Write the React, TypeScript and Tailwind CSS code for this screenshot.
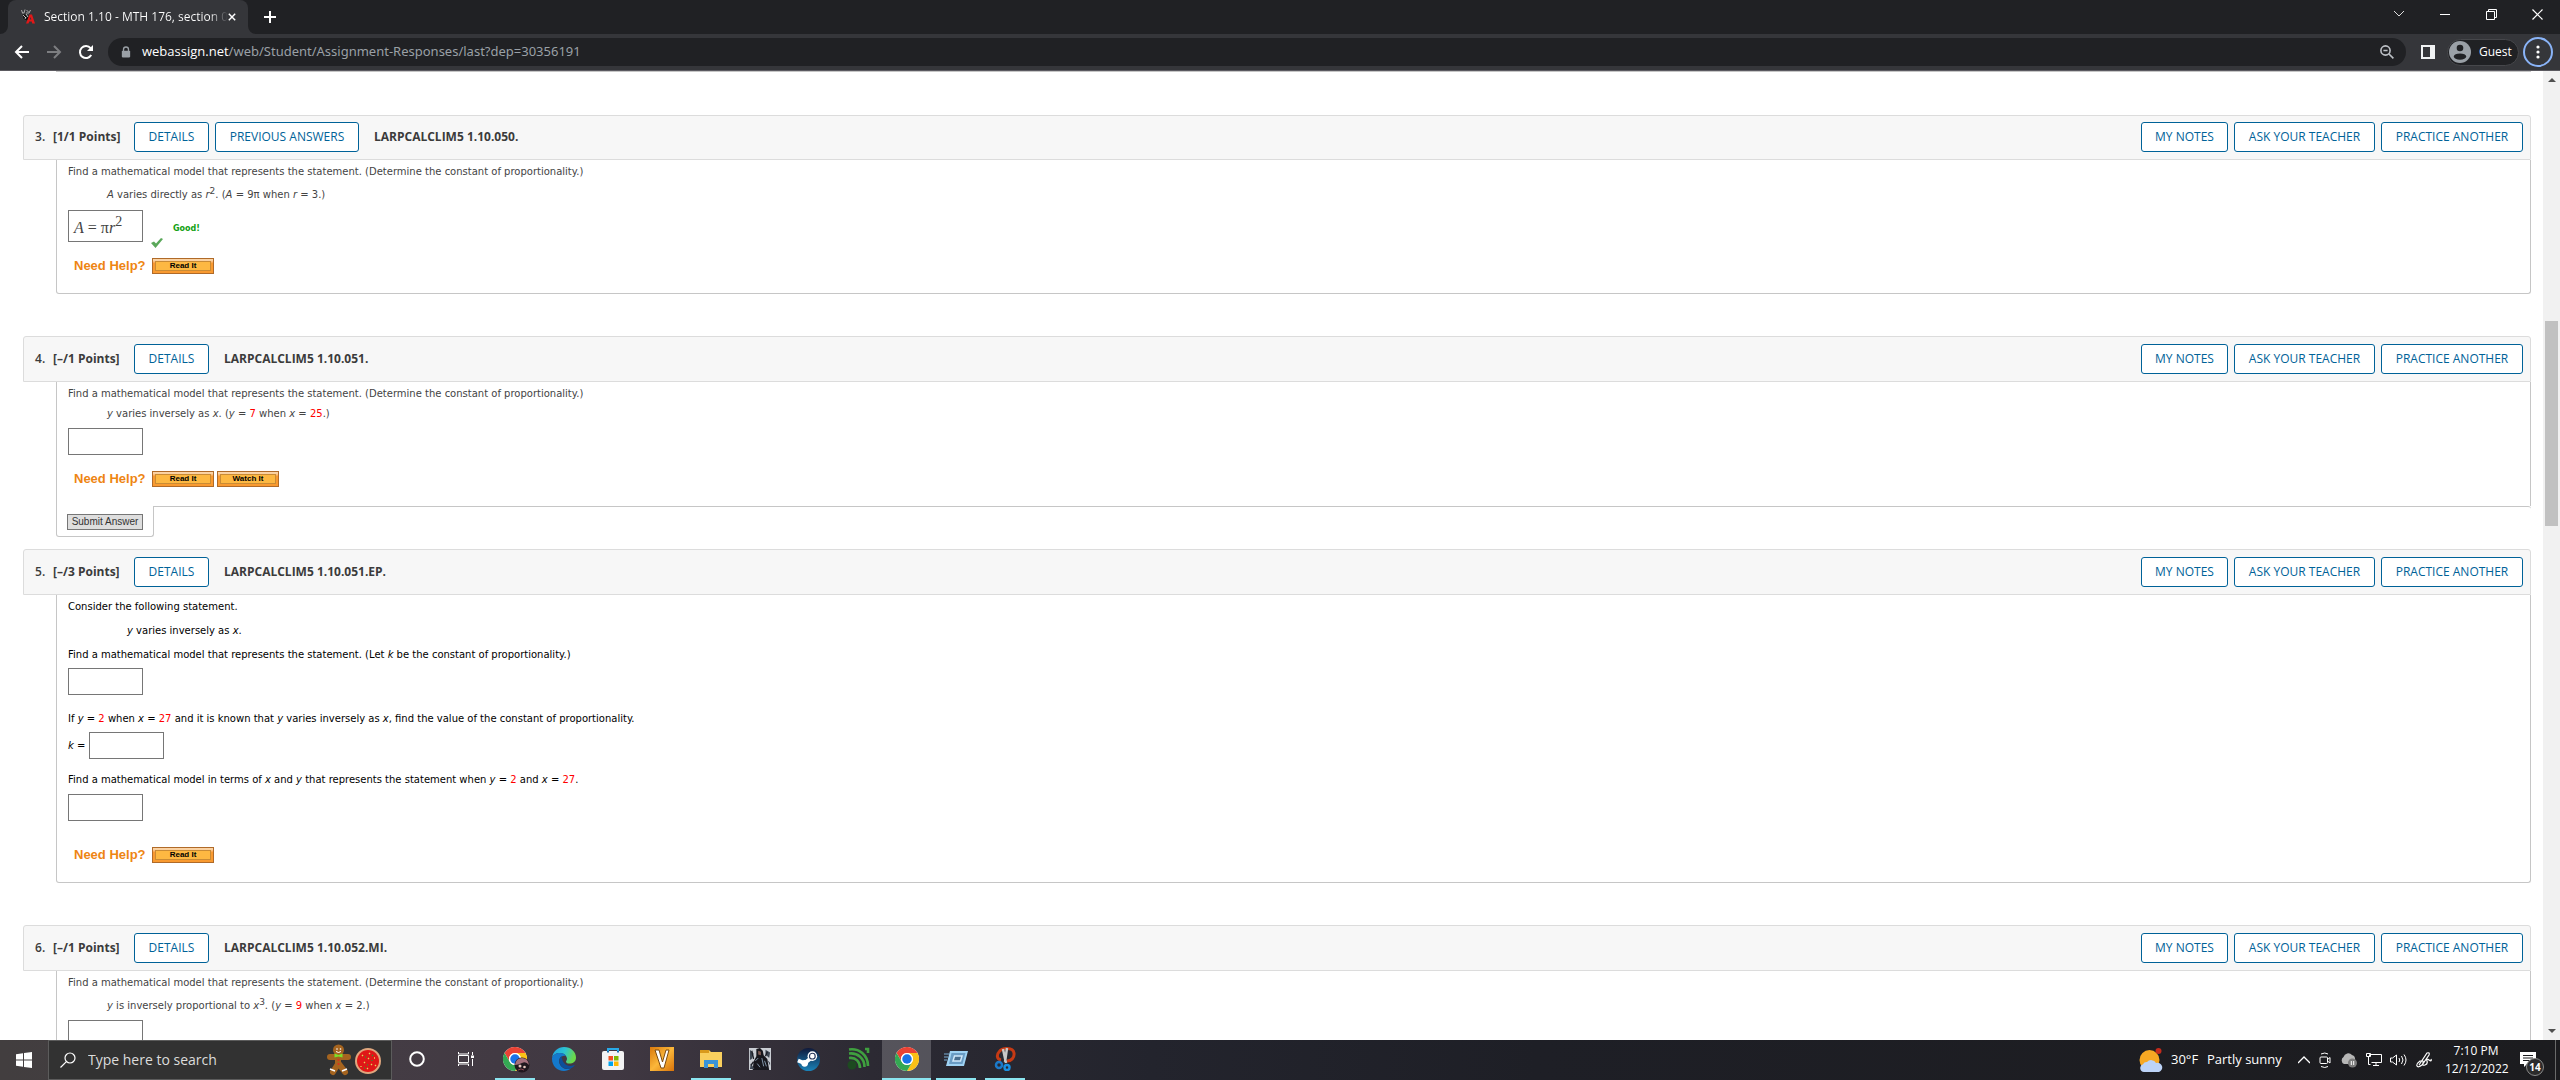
import React, { type ReactNode, useId } from "react";

const I = ({ children }: { children: ReactNode }) => <i>{children}</i>;
const R = ({ children }: { children: ReactNode }) => <span className="text-[#ff0000]">{children}</span>;

function OutlineButton({ children, className = "" }: { children: ReactNode; className?: string }) {
  return (
    <button className={`h-[30px] shrink-0 whitespace-nowrap rounded-[3px] border border-[#006298] bg-white text-center font-['Open_Sans',sans-serif] text-xs text-[#006298] ${className}`}>
      {children}
    </button>
  );
}

function QuestionHeader({ num, points, code, previous }: { num: string; points: string; code: string; previous?: boolean }) {
  return (
    <header className={`flex items-center rounded-t-[3px] border border-[#dcdcdc] bg-[#f7f7f7] pb-px pl-[11px] pr-[7px] font-['Open_Sans',sans-serif] text-xs font-bold text-[#3b3b3b] ${previous ? "h-[45px]" : "h-[46px]"}`}>
      <span className="w-[18px] font-semibold">{num}.</span>
      <span className="w-[81px]">[{points} Points]</span>
      <div className="mr-[15px] flex gap-[6px]">
        <OutlineButton className="w-[75px] font-normal">DETAILS</OutlineButton>
        {previous && <OutlineButton className="w-[144px] font-normal">PREVIOUS ANSWERS</OutlineButton>}
      </div>
      <h2>{code}</h2>
      <div className="ml-auto flex gap-[6px]">
        <OutlineButton className="w-[87px] font-normal">MY NOTES</OutlineButton>
        <OutlineButton className="w-[141px] font-normal">ASK YOUR TEACHER</OutlineButton>
        <OutlineButton className="w-[142px] font-normal">PRACTICE ANOTHER</OutlineButton>
      </div>
    </header>
  );
}

function AnswerBox({ label, id }: { label?: string; id?: string }) {
  return <input id={id} aria-label={label} className="block h-[27px] w-[75px] border border-[#767676] bg-white px-1" />;
}

function HelpButton({ children }: { children: ReactNode }) {
  return (
    <button className="h-4 w-[62px] border border-[#b06a28] bg-gradient-to-b from-[#fbd3a4] from-10% to-[#f99a30] to-30% p-[2px] font-['Liberation_Sans',sans-serif] text-[8px] font-bold text-black">
      <span className="flex h-full items-center justify-center border border-[#c98b35] bg-[#fdb842]">{children}</span>
    </button>
  );
}

function NeedHelp({ watch }: { watch?: boolean }) {
  return (
    <div className="flex h-4 items-center gap-[3px] pl-[6px]">
      <span className="w-[75px] whitespace-nowrap font-['Liberation_Sans',sans-serif] text-[13px] font-bold text-[#ee8512]">Need Help?</span>
      <HelpButton>Read It</HelpButton>
      {watch && <HelpButton>Watch It</HelpButton>}
    </div>
  );
}

const bodyBase = "ml-[33px] rounded-b-[3px] border-x border-b border-[#c6c6c6] pl-[11px] pt-1 font-['DejaVu_Sans',Verdana,sans-serif] text-[10px] leading-4";

function Chrome({ className = "" }: { className?: string }) {
  return (
    <svg viewBox="0 0 48 48" className={className} aria-hidden="true">
      <circle cx="24" cy="24" r="24" fill="#fff" />
      <path d="M24 12h20.8A24 24 0 0 0 3.2 12l10.4 18A12 12 0 0 1 24 12z" fill="#ea4335" />
      <path d="M34.4 30 24 48a24 24 0 0 0 20.8-36H24a12 12 0 0 1 10.4 18z" fill="#fbc116" />
      <path d="M13.6 30 3.2 12A24 24 0 0 0 24 48l10.4-18a12 12 0 0 1-20.8 0z" fill="#34a853" />
      <circle cx="24" cy="24" r="12" fill="#fff" />
      <circle cx="24" cy="24" r="9.5" fill="#1a73e8" />
    </svg>
  );
}

function BrowserTop() {
  return (
    <header className="shrink-0 bg-[#202124] font-['Open_Sans',sans-serif] text-white">
      <div className="flex h-[34px] items-stretch pl-2">
        <div className="relative flex w-60 items-center rounded-t-lg bg-[#35363a] pl-3">
          <svg viewBox="0 0 8 8" className="absolute -left-2 bottom-0 h-2 w-2" fill="#35363a" aria-hidden="true"><path d="M8 0v8H0a8 8 0 0 0 8-8z" /></svg>
          <svg viewBox="0 0 8 8" className="absolute -right-2 bottom-0 h-2 w-2" fill="#35363a" aria-hidden="true"><path d="M0 0v8h8a8 8 0 0 1-8-8z" /></svg>
          <svg viewBox="0 0 16 16" className="h-4 w-4" aria-hidden="true">
            <path d="M1.5 1l1 3M5 .5L4 4M6.5 1l2 2M10.5 1L9 4M2 4h2M6 4h3" stroke="#a8a8a8" fill="none" />
            <path d="M2 5l3 0 4 1v4l-2 2-4-2z" fill="#111" stroke="#555" strokeWidth=".5" />
            <path d="M3 6l3 3M6 5l2 3M5 10l1-2" stroke="#e8e8e8" strokeWidth=".8" />
            <path d="M6 14.5l3.5-9h2.500l3 9h-2.800l-.5-2H9.200l-.7 2zM9.700 10.500h1.600L10.600 8z" fill="#e01818" />
          </svg>
          <span className="ml-2 w-[184px] whitespace-nowrap bg-gradient-to-r from-white from-90% to-[#35363a] bg-clip-text text-xs text-transparent">Section 1.10 - MTH 176, section 0</span>
          <button aria-label="Close tab" className="-ml-1 grid h-4 w-4 place-items-center">
            <svg viewBox="0 0 10 10" className="h-2 w-2" aria-hidden="true"><path d="M1 1l8 8M9 1l-8 8" stroke="#fff" strokeWidth="1.8" /></svg>
          </button>
        </div>
        <button aria-label="New tab" className="ml-3 grid w-5 place-items-center">
          <svg viewBox="0 0 12 12" className="h-3 w-3" aria-hidden="true"><path d="M6 0v12M0 6h12" stroke="#fff" strokeWidth="2" /></svg>
        </button>
        <div className="ml-auto flex pb-[6px]">
          <button aria-label="Search tabs" className="grid w-[46px] place-items-center">
            <svg viewBox="0 0 12 8" className="h-2 w-3" fill="none" stroke="#ddd"><path d="M1 1l5 5 5-5" /></svg>
          </button>
          <button aria-label="Minimize" className="grid w-[46px] place-items-center"><span className="h-px w-[10px] bg-white" /></button>
          <button aria-label="Restore" className="grid w-[46px] place-items-center">
            <svg viewBox="0 0 11 11" className="h-[11px] w-[11px]" fill="none" stroke="#fff"><path d="M.5 2.5h8v8h-8zM2.5 2.5v-2h8v8h-2" /></svg>
          </button>
          <button aria-label="Close" className="grid w-[46px] place-items-center">
            <svg viewBox="0 0 11 11" className="h-[11px] w-[11px]" fill="none" stroke="#fff" strokeWidth="1.2"><path d="M.5.5l10 10M10.5.5l-10 10" /></svg>
          </button>
        </div>
      </div>
      <div className="flex h-[37px] items-center border-b border-[#5b5a60] bg-[#35363a] pl-[14px] pr-[7px]">
        <div className="flex w-[94px] gap-4">
          <button aria-label="Back"><svg viewBox="0 0 16 16" className="h-4 w-4" fill="none" stroke="#fff" strokeWidth="2"><path d="M15 8H2M8 2L2 8l6 6" /></svg></button>
          <button aria-label="Forward"><svg viewBox="0 0 16 16" className="h-4 w-4" fill="none" stroke="#7d7e81" strokeWidth="2"><path d="M1 8h13M8 2l6 6-6 6" /></svg></button>
          <button aria-label="Reload"><svg viewBox="0 0 16 16" className="h-4 w-4" fill="none" stroke="#fff" strokeWidth="2"><path d="M13.2 11A6 6 0 1 1 12.6 4.2" /><path d="M15 1v6H9z" fill="#fff" stroke="none" /></svg></button>
        </div>
        <div className="flex h-7 flex-1 items-center rounded-full bg-[#202124] px-3">
          <svg viewBox="0 0 12 14" className="mx-[1px] h-3 w-[10px]" aria-hidden="true"><path d="M3 6V4a3 3 0 0 1 6 0v2" fill="none" stroke="#9aa0a6" strokeWidth="1.6" /><rect x="1" y="5.5" width="10" height="8" rx="1" fill="#9aa0a6" /></svg>
          <div className="ml-[10px] text-[13px] text-[#9aa0a6]"><span className="text-white">webassign.net</span><span className="font-['Noto_Sans',sans-serif]">/web/Student/Assignment-Responses/last?dep=30356191</span></div>
          <svg viewBox="0 0 14 14" className="ml-auto h-[14px] w-[14px]" fill="none" stroke="#bdc1c6" strokeWidth="1.6" aria-hidden="true"><circle cx="5.5" cy="5.5" r="4.6" /><path d="M9 9l4.4 4.4M3.4 5.5h4.2" /></svg>
        </div>
        <button aria-label="Side panel" className="ml-[15px]"><svg viewBox="0 0 14 14" className="h-[14px] w-[14px]"><path d="M0 0h14v14H0zM2 2v10h7V2z" fill="#f1f3f4" fillRule="evenodd" /></svg></button>
        <button className="ml-3 flex h-[27px] w-[72px] items-center gap-2 rounded-full border border-[#46474b] bg-[#202124] pl-[1px] text-xs">
          <svg viewBox="0 0 22 22" className="h-[22px] w-[22px]"><circle cx="11" cy="11" r="11" fill="#9aa0a6" /><circle cx="11" cy="7" r="3.3" fill="#202124" /><ellipse cx="11" cy="15.6" rx="6.2" ry="3.2" fill="#202124" /></svg>
          Guest
        </button>
        <button aria-label="Menu" className="ml-1 grid h-[30px] w-[30px] place-items-center rounded-full border-2 border-[#8ab4f8]">
          <svg viewBox="0 0 4 14" className="h-[14px] w-1" fill="#fff"><circle cx="2" cy="2" r="1.6" /><circle cx="2" cy="7" r="1.6" /><circle cx="2" cy="12" r="1.6" /></svg>
        </button>
      </div>
    </header>
  );
}

function TaskItem({ label, open, active, children }: { label: string; open?: boolean; active?: boolean; children: ReactNode }) {
  return (
    <button aria-label={label} className={`flex h-10 w-[49px] flex-col items-center ${active ? "bg-white/20" : ""}`}>
      <span className="grid h-[38px] place-items-center">{children}</span>
      {open && <span className={`h-[2px] bg-[#8be5f0] ${active ? "w-full" : "w-10"}`} />}
    </button>
  );
}

function Taskbar() {
  return (
    <footer className="flex h-10 shrink-0 items-stretch bg-[linear-gradient(90deg,#423e3f_0%,#443c44_15%,#403842_24%,#2c2a33_34%,#23242d_45%,#1e1f26_60%,#1c1c1f_100%)] font-['Open_Sans',sans-serif] text-white">
      <button aria-label="Start" className="grid w-12 place-items-center">
        <svg viewBox="0 0 16 16" className="h-4 w-4" fill="#fff"><path d="M0 2.2l7-1v6.3H0zM8 1l8-1v7.5H8zM0 8.5h7v6.3l-7-1zM8 8.5h8V16l-8-1z" /></svg>
      </button>
      <label className="flex w-[344px] items-center border border-[#5c5c5c] bg-[#323232] pl-[11px]">
        <svg viewBox="0 0 16 16" className="h-4 w-4" fill="none" stroke="#fff" strokeWidth="1.2" aria-hidden="true"><circle cx="10" cy="6" r="5" /><path d="M6.4 9.6L.5 15.5" /></svg>
        <input aria-label="Type here to search" placeholder="Type here to search" className="ml-3 w-[238px] bg-transparent text-sm placeholder:text-[#dcdcdc]" />
        <svg viewBox="0 0 56 32" className="h-8 w-14" aria-hidden="true">
          <g stroke="#a5641f" strokeLinecap="round" strokeWidth="6"><path d="M4 13h18M12 12v9M12 20l-5 8M13 20l6 8" fill="none" /></g>
          <circle cx="12.5" cy="6" r="5.5" fill="#a5641f" />
          <circle cx="11" cy="5" r=".8" fill="#fff" /><circle cx="14.5" cy="5" r=".8" fill="#fff" /><path d="M10 7.5q2.5 2 5 0" stroke="#fff" fill="none" />
          <path d="M8.5 9.5l4 1.5 4-1.5v4l-4-1-4 1z" fill="#7be02a" />
          <circle cx="12.5" cy="16" r="1" fill="#e02b1e" /><circle cx="12.5" cy="20" r="1" fill="#e02b1e" />
          <path d="M4 25l5 2M21 25l-5 2" stroke="#fff" strokeWidth="1.5" />
          <circle cx="42" cy="17" r="13" fill="#e0a77e" /><circle cx="42" cy="17" r="11" fill="#e01717" />
          <path d="M36 11l1 1M43 9l1 1M48 14l1 0M38 18l1 1M45 20l1 1M41 25l1-1M35 22l0 1M49 21l1 1M42 14l1 1" stroke="#e7d25a" strokeWidth="1.3" />
          <path d="M39 13l1 0M46 16l0 1M41 21l1 0M46 11l1 1M38 24l1 0" stroke="#3b8d2c" strokeWidth="1.3" />
        </svg>
      </label>
      <div className="flex">
        <TaskItem label="Cortana"><svg viewBox="0 0 16 16" className="h-4 w-4"><circle cx="8" cy="8" r="6.8" fill="none" stroke="#fff" strokeWidth="2" /></svg></TaskItem>
        <TaskItem label="Task view"><svg viewBox="0 0 16 16" className="h-4 w-4" fill="none" stroke="#fff"><path d="M.5 4.5h10v7H.5zM.5 1v2h10V1M.5 15v-2h10v2M14.5 1v3M14.5 8v7" /><path d="M13 4.5h3v2.5h-3z" fill="#fff" stroke="none" /></svg></TaskItem>
        <TaskItem label="Chrome profile" open>
          <span className="relative"><Chrome className="h-6 w-6" />
            <svg viewBox="0 0 16 16" className="absolute left-[11px] top-[10px] h-4 w-4"><circle cx="8" cy="8" r="7.5" fill="#21181f" /><path d="M1 8Q2 1 8 1t7 7q-3-4-7-2T1 8z" fill="#a5707d" /><circle cx="6" cy="9" r="1.5" fill="#e8c7c0" /><circle cx="10.5" cy="10" r="1.3" fill="#e8c7c0" /><path d="M4 13l3-1 3 1" stroke="#8c4b57" /></svg>
          </span>
        </TaskItem>
        <TaskItem label="Edge">
          <svg viewBox="0 0 24 24" className="h-6 w-6">
            <defs><linearGradient id="edgeA" x1="0" y1="0" x2="1" y2="0.3"><stop offset="0" stopColor="#1f9de3" /><stop offset=".55" stopColor="#2cc3d2" /><stop offset="1" stopColor="#6bd94b" /></linearGradient></defs>
            <path d="M0 11C1 4 6 0 12 0c7 0 12 5 12 10.5 0 4-3 6-6.5 6-2.5 0-3.5-1-3.5-1.8 0-.8 1-1.3 1-3C15 9 12 6 8 6c-4 0-7 2-8 5z" fill="url(#edgeA)" />
            <path d="M0 11c1-3 4-5 8-5 3 0 5 1.3 6 3-5-1-8 3-6.5 7.5C9 21 14 23 19 21.5 17 23 14.5 24 12 24 5 24 0 18.5 0 12z" fill="#1479cc" />
            <path d="M9.5 9C6 12 7 18 11 20.5c4 2.5 9 1.5 11.5-2 .4-.5 0-.8-.4-.5-6 3-12-1-12.6-9z" fill="#0c4f9b" />
          </svg>
        </TaskItem>
        <TaskItem label="Microsoft Store">
          <svg viewBox="0 0 24 24" className="h-6 w-6"><path d="M7 6V2h10v4" fill="none" stroke="#29a9e8" strokeWidth="2" /><rect x="1" y="4" width="22" height="19" rx="2" fill="#f3f3f3" /><path d="M7 5.5V4M17 5.5V4" stroke="#1d6fae" strokeWidth="2" /><path d="M7.5 9H12v4.5H7.5z" fill="#f25022" /><path d="M13 9h4.5v4.5H13z" fill="#7fba00" /><path d="M7.5 14.5H12V19H7.5z" fill="#00a4ef" /><path d="M13 14.5h4.5V19H13z" fill="#ffb900" /></svg>
        </TaskItem>
        <TaskItem label="Vortex">
          <svg viewBox="0 0 24 24" className="h-6 w-6"><defs><linearGradient id="vx" x1="0" y1="0" x2="1" y2="1"><stop offset="0" stopColor="#d9780c" /><stop offset=".5" stopColor="#fbb73a" /><stop offset="1" stopColor="#d8720a" /></linearGradient></defs><path d="M0 0h24v24H0z" fill="url(#vx)" /><path d="M5 3h4l3.5 12L16 3h3l-5 18h-3z" fill="#fff" stroke="#7b4a10" strokeWidth="1" /></svg>
        </TaskItem>
        <TaskItem label="File Explorer" open>
          <svg viewBox="0 0 24 24" className="h-6 w-6"><path d="M1 3h9l2 2h11v15H1z" fill="#f9cf5e" /><path d="M1 3h9v3H1z" fill="#d99a1c" /><path d="M5 13h14v8h-4v-4H9v4H5z" fill="#3a93d8" /></svg>
        </TaskItem>
        <TaskItem label="Game">
          <svg viewBox="0 0 24 24" className="h-[22px] w-[22px]"><path d="M0 0h24v24H0z" fill="#c9cdd3" /><path d="M8 1l4-1 3 3 1 5 4 4 2 12H4l1-9 3-6z" fill="#17171d" /><path d="M1 2l4 4-2 6-2 1zM18 2l5 3-1 6-4-4zM2 17l4 6H1zM20 13l3 3v3z" fill="#3d4652" /><path d="M3 3l2 9M20 4l-2 5M5 15l-3 4" stroke="#1d2028" strokeWidth="1.5" /><path d="M10 3l3 1v4l-3-1z" fill="#7d5b54" /><path d="M7 14l3-3M14 11l2 9M9 17l3 4M17 14l2 6" fill="none" stroke="#8ba0b3" /></svg>
        </TaskItem>
        <TaskItem label="Steam">
          <svg viewBox="0 0 24 24" className="h-[23px] w-[23px]"><defs><linearGradient id="st" x1="0" y1="0" x2="0" y2="1"><stop offset="0" stopColor="#10193a" /><stop offset="1" stopColor="#1983b9" /></linearGradient></defs><circle cx="12" cy="12" r="12" fill="url(#st)" /><path d="M1 13l7 3 6-5" stroke="#fff" strokeWidth="4" fill="none" /><circle cx="8" cy="16" r="3.5" fill="#fff" /><circle cx="16" cy="8.5" r="5" fill="#fff" /><circle cx="16" cy="8.5" r="3" fill="none" stroke="#26375b" strokeWidth="1.2" /></svg>
        </TaskItem>
        <TaskItem label="Feed">
          <svg viewBox="0 0 24 24" className="h-6 w-6" fill="none" stroke="#3fa03f" strokeWidth="2.6"><circle cx="6" cy="18" r="4.5" fill="#1d4a20" stroke="none" /><path d="M3 11c7-1 11 4 11 10M3 6.500c9-1 15.500 5 15.500 13.500M3 2.500C13 1 22 8 22 19M19 2h3v4" /></svg>
        </TaskItem>
        <TaskItem label="Chrome" open active><Chrome className="h-6 w-6" /></TaskItem>
        <TaskItem label="Remote desktop" open>
          <svg viewBox="0 0 24 24" className="h-6 w-6"><path d="M6 4h18l-4 15H2z" fill="#9fd2f3" /><path d="M7.5 6h14l-3 11H5z" fill="#6a9cc4" /><path d="M10.5 9h7.5l-1.5 5H9z" fill="#4a6f90" stroke="#cfe8fa" strokeWidth="1.5" /><path d="M0 7h5M0 10h4M0 13h3" stroke="#78aed6" /></svg>
        </TaskItem>
        <TaskItem label="Snipping tool" open>
          <svg viewBox="0 0 24 24" className="h-6 w-6" fill="none"><path d="M8 13C3 12 4 7 6 5c3-4.500 14-5 15 1 .7 5-3 8-7 8" stroke="#c63a14" strokeWidth="3" /><path d="M10 2l3 14M14 1l-2 14" stroke="#c8c8c8" strokeWidth="2.5" /><circle cx="6" cy="18" r="3" stroke="#1b79c9" strokeWidth="2.5" /><circle cx="14" cy="20.5" r="2.5" stroke="#1b8fe0" strokeWidth="2.5" /></svg>
        </TaskItem>
      </div>
      <div className="ml-auto flex items-center text-[13px]">
        <svg viewBox="0 0 24 24" className="mr-2 h-6 w-6" aria-hidden="true"><circle cx="10.5" cy="12" r="10" fill="#f6a823" /><circle cx="19.5" cy="3" r="3" fill="#c42b1c" /><path d="M5 24a4 4 0 0 1-1-7.8A4 4 0 0 1 8 14a5.5 5.5 0 0 1 9 1 4.6 4.6 0 0 1 3 9z" fill="#bcd3f7" /></svg>
        <span className="w-[36px]">30°F</span>
        <span className="w-[91px] whitespace-nowrap">Partly sunny</span>
        <div className="flex items-center gap-2">
          <svg viewBox="0 0 12 8" className="h-2 w-3" fill="none" stroke="#fff" strokeWidth="1.3"><path d="M0 7l6-6 6 6" /></svg>
          <svg viewBox="0 0 14 16" className="h-4 w-[14px]" fill="none" stroke="#fff"><rect x="2" y="5" width="7.5" height="6.5" rx="1" /><path d="M9.5 7.5l2.5-2v5.5l-2.5-2M3 2q4-2 7 0M3 14.5q4 2 7 0" /></svg>
          <svg viewBox="0 0 18 16" className="h-4 w-[18px]"><path d="M4 12a4 4 0 0 1-.5-7A5 5 0 0 1 12 3a3.5 3.5 0 0 1 3 3v6z" fill="#b6b6b6" /><circle cx="12.5" cy="11" r="4.5" fill="#7b7b7b" /><path d="M11.3 9v4M13.7 9v4" stroke="#fff" /></svg>
          <svg viewBox="0 0 16 14" className="h-[14px] w-4" fill="none" stroke="#fff"><path d="M3.5 4V1.5h12v8h-10M.5.5h4v3h-4zM2.5 3.5v8h2M10 9.5v3M7 12.5h6" /></svg>
          <svg viewBox="0 0 17 14" className="h-[14px] w-[17px]" fill="none" stroke="#fff"><path d="M.5 5v4h2l4 3V2l-4 3zM9 5q1.5 2 0 4M11.5 3q3 4 0 8M14 1.5q4 5.5 0 11" /></svg>
          <svg viewBox="0 0 18 16" className="h-4 w-[18px]" fill="none" stroke="#fff" strokeWidth="1.2"><path d="M4 13L12 1q3-1 2 2L7 13q-4 3-5 1t3-5q4-1 3 2t2 2 2-4 2-1 2-1" /></svg>
        </div>
        <div className="ml-3 w-[62px] text-center text-xs leading-[18px]"><div>7:10 PM</div><div>12/12/2022</div></div>
        <button aria-label="Notifications" className="relative ml-3 h-full w-[34px] text-[10px]">
          <svg viewBox="0 0 16 16" className="absolute left-[1px] top-3 h-4 w-4"><path d="M0 0h16v12H7l-3 3v-3H0z" fill="#fff" /><path d="M3 3.5h10M3 6h10M3 8.5h7" stroke="#1c1c1f" /></svg>
          <span className="absolute left-[7px] top-[18px] grid h-[18px] w-[18px] place-items-center rounded-full border border-[#8a8a8a] bg-[#2b2b2b] font-bold">14</span>
        </button>
        <span className="ml-[2px] mr-1 h-full w-px bg-[#6a6a6a]" />
      </div>
    </footer>
  );
}

export default function App() {
  const kId = useId();
  return (
    <div className="flex h-screen flex-col overflow-hidden bg-white">
      <BrowserTop />
      <div className="flex min-h-0 flex-1">
        <main className="flex-1 overflow-hidden pl-[23px] pr-3">
          <div className="ml-[33px] h-[44px] border-t border-[#c6c6c6]" />
          <section className="mb-[42px]">
            <QuestionHeader num="3" points="1/1" code="LARPCALCLIM5 1.10.050." previous />
            <div className={`${bodyBase} h-[134px] text-[#444]`}>
              <p>Find a mathematical model that represents the statement. (Determine the constant of proportionality.)</p>
              <p className="mt-[7px] pl-[39px]"><I>A</I> varies directly as <I>r</I><sup className="text-[9px]">2</sup>. (<I>A</I> = 9π when <I>r</I> = 3.)</p>
              <div className="mt-[7px] flex h-[38px] items-start">
                <div role="math" aria-label="A = πr²" className="h-8 w-[75px] border border-[#767676] pl-[5px] pt-[7px] font-['Liberation_Serif',serif] text-base leading-5">
                  <I>A</I> = π<I>r</I><sup className="text-sm">2</sup>
                </div>
                <svg viewBox="0 0 12 10" className="ml-2 mt-[28px] h-[10px] w-3" aria-hidden="true"><path d="M0 5l3-1.5L5 5.5 10 0l2 1-7.5 9z" fill="#5aa85a" /></svg>
                <b className="ml-[10px] mt-[11px] text-[8px] text-[#11a011]">Good!</b>
              </div>
              <div className="mt-[10px]"><NeedHelp /></div>
            </div>
          </section>

          <section className="mb-3">
            <QuestionHeader num="4" points="–/1" code="LARPCALCLIM5 1.10.051." />
            <div className={`${bodyBase} h-[124px] rounded-b-none border-b-0 text-[#444]`}>
              <p>Find a mathematical model that represents the statement. (Determine the constant of proportionality.)</p>
              <p className="mt-1 pl-[39px]"><I>y</I> varies inversely as <I>x</I>. (<I>y</I> = <R>7</R> when <I>x</I> = <R>25</R>.)</p>
              <div className="mt-[6px]"><AnswerBox label="Model for question 4" /></div>
              <div className="mt-4"><NeedHelp watch /></div>
            </div>
            <div className="ml-[33px] flex">
              <div className="h-[31px] w-[98px] rounded-b-[3px] border-x border-b border-[#c6c6c6] pl-[10px] pt-2">
                <button className="block h-4 w-[76px] whitespace-nowrap border border-[#767676] bg-[#dedede] font-['Liberation_Sans',sans-serif] text-[10px] leading-[14px] text-[#333]">Submit Answer</button>
              </div>
              <div className="flex-1 rounded-tr-[3px] border-t border-[#c6c6c6]" />
            </div>
          </section>

          <section className="mb-[42px]">
            <QuestionHeader num="5" points="–/3" code="LARPCALCLIM5 1.10.051.EP." />
            <div className={`${bodyBase} h-[288px] text-black`}>
              <p>Consider the following statement.</p>
              <p className="mt-2 pl-[59px]"><I>y</I> varies inversely as <I>x</I>.</p>
              <p className="mt-2">Find a mathematical model that represents the statement. (Let <I>k</I> be the constant of proportionality.)</p>
              <div className="mt-[5px]"><AnswerBox label="Model with k" /></div>
              <p className="mt-4">If <I>y</I> = <R>2</R> when <I>x</I> = <R>27</R> and it is known that <I>y</I> varies inversely as <I>x</I>, find the value of the constant of proportionality.</p>
              <div className="mt-[5px] flex items-center"><label htmlFor={kId} className="w-[21px] whitespace-nowrap"><I>k</I> =</label><AnswerBox id={kId} /></div>
              <p className="mt-[13px]">Find a mathematical model in terms of <I>x</I> and <I>y</I> that represents the statement when <I>y</I> = <R>2</R> and <I>x</I> = <R>27</R>.</p>
              <div className="mt-[6px]"><AnswerBox label="Model in terms of x and y" /></div>
              <div className="mt-[26px]"><NeedHelp /></div>
            </div>
          </section>

          <section>
            <QuestionHeader num="6" points="–/1" code="LARPCALCLIM5 1.10.052.MI." />
            <div className={`${bodyBase} h-[133px] text-[#444]`}>
              <p>Find a mathematical model that represents the statement. (Determine the constant of proportionality.)</p>
              <p className="mt-[7px] pl-[39px]"><I>y</I> is inversely proportional to <I>x</I><sup className="text-[9px]">3</sup>. (<I>y</I> = <R>9</R> when <I>x</I> = 2.)</p>
              <div className="mt-[6px]"><AnswerBox label="Model for question 6" /></div>
            </div>
          </section>
        </main>
        <div className="flex w-[17px] flex-col items-center justify-between bg-[#f1f1f1] py-[7px]">
          <svg viewBox="0 0 8 4" className="h-1 w-2" fill="#505050"><path d="M0 4l4-4 4 4z" /></svg>
          <div className="mb-auto mt-[239px] h-[205px] w-[13px] bg-[#c1c1c1]" />
          <svg viewBox="0 0 8 4" className="h-1 w-2" fill="#505050"><path d="M0 0l4 4 4-4z" /></svg>
        </div>
      </div>
      <Taskbar />
    </div>
  );
}
